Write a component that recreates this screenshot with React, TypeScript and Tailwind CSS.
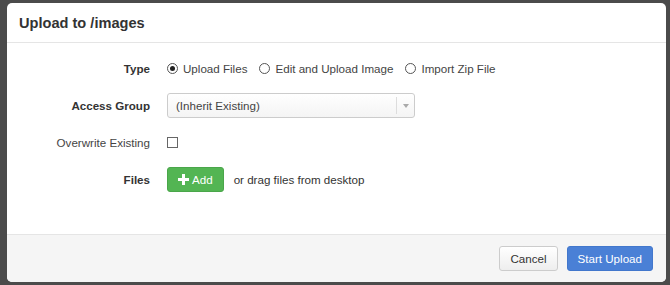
const Radio = ({ checked, label }: { checked?: boolean; label: string }) => (
  <label className="flex items-center gap-[5px]">
    <span className="w-[11px] h-[11px] rounded-full border border-[#555] bg-white flex items-center justify-center">
      {checked && <span className="w-[5px] h-[5px] rounded-full bg-[#222]" />}
    </span>
    <span>{label}</span>
  </label>
)

const Row = ({ label, bold, children }: { label: string; bold?: boolean; children: React.ReactNode }) => (
  <div className="h-[37px] flex items-center">
    <div className={`w-[143px] text-right ${bold ? "font-bold text-[#333]" : "text-[#444]"}`}>{label}</div>
    <div className="pl-[17px] flex items-center">{children}</div>
  </div>
)

export default function App() {
  return (
    <div className="w-[670px] h-[285px] bg-[#4b4b4b] pt-[3px] pl-[7px] font-['Liberation_Sans',Arial,sans-serif] text-[11.6px] text-[#333]">
      <div className="w-[659px] h-[279px] bg-white rounded-[5px] overflow-hidden flex flex-col">
        {/* header */}
        <div className="h-[40px] border-b border-[#e5e5e5] flex items-center px-[12px] pt-[2px]">
          <h3 className="text-[14.6px] font-bold text-[#333]">Upload to /images</h3>
        </div>

        {/* body */}
        <div className="flex-1 flex flex-col pt-[7px]">
          <Row label="Type" bold>
            <div className="flex items-center gap-[12px] text-[#444]">
              <Radio checked label="Upload Files" />
              <Radio label="Edit and Upload Image" />
              <Radio label="Import Zip File" />
            </div>
          </Row>
          <Row label="Access Group" bold>
            <div className="w-[248px] h-[25px] border border-[#ccc] rounded-[3px] bg-gradient-to-b from-white to-[#f4f4f4] flex items-center justify-between pl-[8px] text-[#444]">
              <span>(Inherit Existing)</span>
              <span className="h-[17px] border-l border-[#ddd] w-[18px] flex items-center justify-center">
                <svg width="6" height="4" viewBox="0 0 6 4"><path d="M0 0h6L3 4z" fill="#aaa" /></svg>
              </span>
            </div>
          </Row>
          <Row label="Overwrite Existing">
            <span className="w-[11px] h-[11px] border border-[#666] bg-white" />
          </Row>
          <Row label="Files" bold>
            <div className="flex items-center gap-[10px]">
              <button className="h-[25px] px-[10px] rounded-[3px] bg-[#53b553] border border-[#4aa64a] text-white flex items-center gap-[3px]">
                <svg width="11" height="11" viewBox="0 0 11 11"><path d="M4 0h3v4h4v3H7v4H4V7H0V4h4z" fill="white" /></svg>
                <span>Add</span>
              </button>
              <span className="text-[#333]">or drag files from desktop</span>
            </div>
          </Row>
        </div>

        {/* footer */}
        <div className="h-[48px] border-t border-[#e5e5e5] bg-[#f5f5f5] flex items-center justify-end gap-[9px] pr-[13px]">
          <button className="h-[25px] px-[10px] rounded-[3px] border border-[#ccc] bg-gradient-to-b from-white to-[#eee] text-[#333]">Cancel</button>
          <button className="h-[25px] px-[10px] rounded-[3px] bg-[#4a80d6] border border-[#4277cc] text-white">Start Upload</button>
        </div>
      </div>
    </div>
  )
}
